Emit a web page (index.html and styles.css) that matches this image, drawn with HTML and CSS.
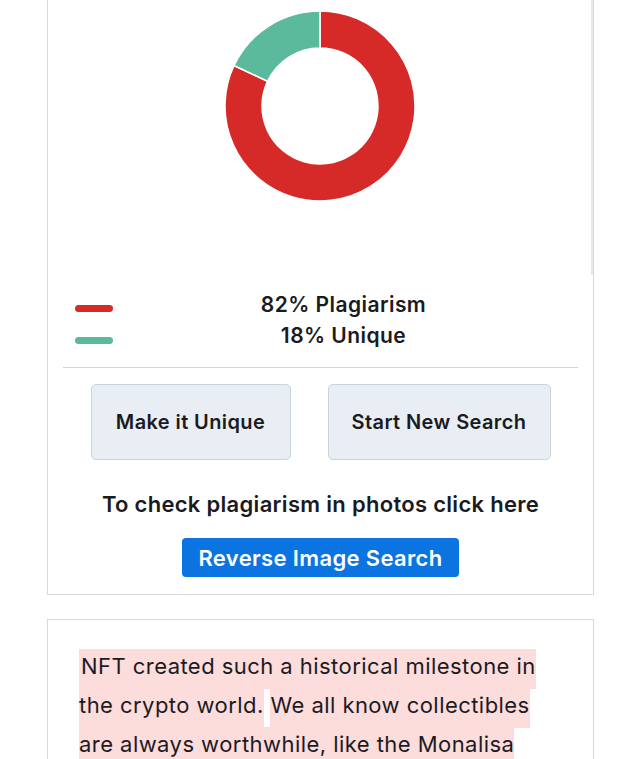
FILE: index.html
```html
<!DOCTYPE html>
<html lang="en">
<head>
<meta charset="utf-8">
<title>Plagiarism result</title>
<link rel="stylesheet" href="styles.css">
</head>
<body>
<div class="page">
  <section class="card result">
    <div class="chart">
      <svg class="donut" width="192" height="192" viewBox="0 0 192 192">
        <path class="seg-red" d="M96 1 A95 95 0 1 1 10.04 55.55 L43.52 71.30 A58 58 0 1 0 96 38 Z"/>
        <path class="seg-green" d="M10.04 55.55 A95 95 0 0 1 96 1 L96 38 A58 58 0 0 0 43.52 71.30 Z"/>
      </svg>
    </div>
    <div class="legend">
      <div class="keys">
        <span class="key key-red"></span>
        <span class="key key-green"></span>
      </div>
      <div class="labels">
        <div>82% Plagiarism</div>
        <div>18% Unique</div>
      </div>
    </div>
    <div class="actions">
      <button class="btn btn-light">Make it Unique</button>
      <button class="btn btn-light">Start New Search</button>
    </div>
    <p class="photo-note">To check plagiarism in photos click here</p>
    <div class="reverse-wrap">
      <button class="btn-blue">Reverse Image Search</button>
    </div>
  </section>
  <section class="card text-card">
    <p class="content"><span class="hl hl-first">NFT created such a historical milestone in the crypto world.</span> <span class="hl">We all know collectibles are always worthwhile, like the Monalisa painting, which is priceless and continues to be a symbol of art.</span></p>
  </section>
</div>
</body>
</html>
```
FILE: styles.css
```css
* { box-sizing: border-box; }
html, body { margin: 0; padding: 0; background: #fff; }
body {
  font-family: "Inter", "Noto Sans", sans-serif;
  color: #1b1b1f;
  overflow: hidden;
  height: 759px;
}
.page {
  width: 547px;
  margin-left: 47px;
}
.card {
  border: 1px solid #d9d9d9;
  background: #fff;
}
.result {
  margin-top: -1px;
}
.chart {
  height: 275px;
  display: flex;
  justify-content: center;
  padding-top: 10px;
  border-right: 2px solid #e6e8ec;
}
.donut { display: block; }
.seg-red { fill: #d62a29; stroke: #fff; stroke-width: 1.5; }
.seg-green { fill: #5bba9b; stroke: #fff; stroke-width: 1.5; }

.legend {
  display: flex;
  margin: 0 15px;
  padding: 14px 0 16px;
  border-bottom: 1px solid #ccd5e0;
}
.keys {
  width: 38px;
  margin-left: 12px;
  display: flex;
  flex-direction: column;
  padding-top: 16px;
  gap: 25px;
}
.key {
  display: block;
  height: 7px;
  border-radius: 4px;
}
.key-red { background: #d62a29; }
.key-green { background: #5bba9b; }
.labels {
  flex: 1;
  text-align: center;
  font-size: 21px;
  letter-spacing: 0.45px;
  font-weight: 600;
  line-height: 31px;
  padding-right: 4px;
}
.actions {
  display: flex;
  justify-content: center;
  gap: 37px;
  margin-top: 16px;
}
.btn {
  font-family: inherit;
  font-size: 20px;
  letter-spacing: 0.4px;
  font-weight: 600;
  color: #1b1b1f;
  height: 76px;
  border-radius: 5px;
  cursor: pointer;
}
.btn-light {
  background: #e9edf4;
  border: 1px solid #c9d2dd;
  padding: 0 10px;
}
.actions .btn:first-child { width: 200px; }
.actions .btn:last-child { width: 223px; }
.photo-note {
  margin: 29px 0 0;
  text-align: center;
  font-size: 22px;
  letter-spacing: 0.3px;
  font-weight: 600;
  line-height: 30px;
}
.reverse-wrap {
  display: flex;
  justify-content: center;
  margin-top: 19px;
  padding-bottom: 17px;
}
.btn-blue {
  font-family: inherit;
  background: #0b74e1;
  color: #fff;
  border: 0;
  border-radius: 4px;
  font-size: 22px;
  letter-spacing: 0.35px;
  font-weight: 600;
  height: 39px;
  width: 277px;
  padding: 0;
}
.text-card {
  margin-top: 24px;
  padding: 27px 52px 20px 31px;
  height: 200px;
}
.content {
  margin: 0;
  font-size: 22px;
  letter-spacing: 0.45px;
  line-height: 39px;
  font-weight: 400;
}
.hl {
  background: #fddcdc;
  padding: 4px 0 10px;
}
.hl-first {
  padding-left: 2px;
}
```
